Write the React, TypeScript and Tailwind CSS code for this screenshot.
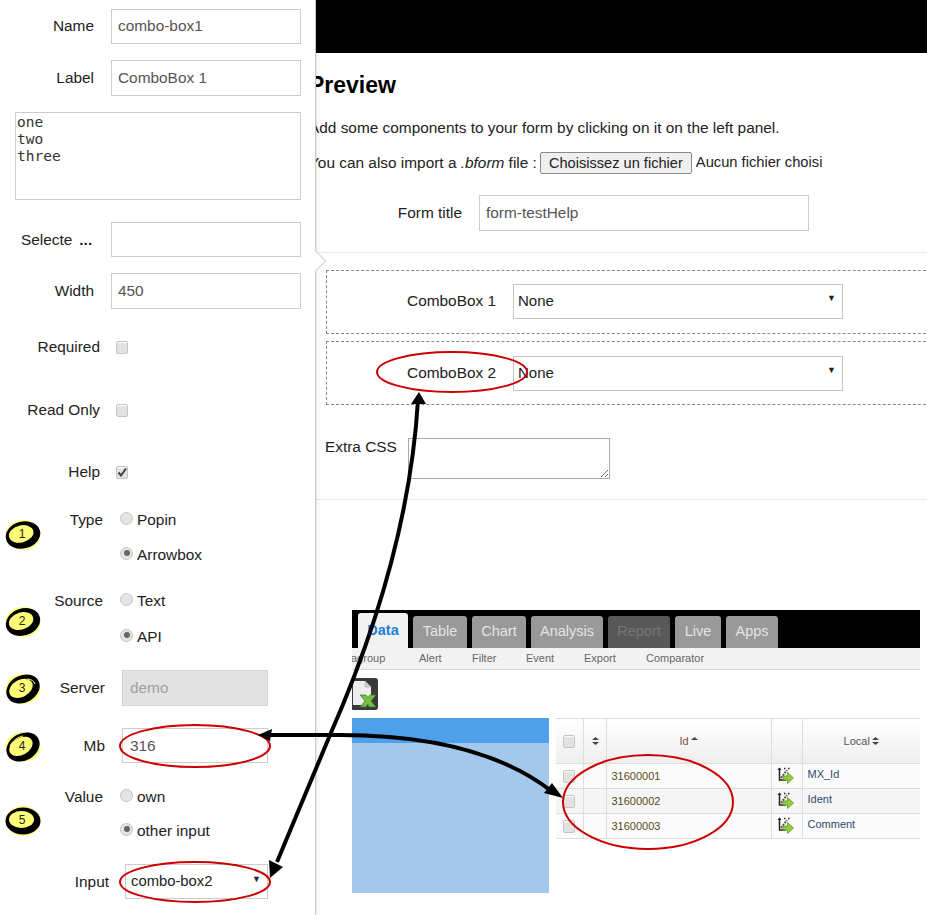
import React from "react";

const inputCls = "border border-[#cccccc] bg-white px-[6px] text-[#555555] flex items-center";

function Check({ on }: { on?: boolean }) {
  return (
    <span className="w-[12px] h-[13px] rounded-[2px] border border-[#c4c4c4] bg-[#e2e2e2] flex items-center justify-center shadow-[inset_0_1px_1px_#fff]">
      {on && (
        <svg width="10" height="10" viewBox="0 0 10 10">
          <path d="M1.5 5.5 L4 8.5 L9 1.5" fill="none" stroke="#444" strokeWidth="2" />
        </svg>
      )}
    </span>
  );
}

function Radio({ on }: { on?: boolean }) {
  return (
    <span className="w-[13px] h-[13px] rounded-full border border-[#c4c4c4] bg-[#e4e4e4] flex items-center justify-center">
      {on && <span className="w-[6px] h-[6px] rounded-full bg-[#666666]" />}
    </span>
  );
}

function Badge({ n, rot, extra, className }: { n: number; rot: number; extra?: string; className: string }) {
  return (
    <div className={"absolute w-[36px] h-[30px] " + className}>
      <svg width="36" height="30" viewBox="0 0 36 30" className="absolute inset-0">
        <ellipse cx="18" cy="15" rx="17.5" ry="15" fill="#ffff77" />
        <ellipse cx="18" cy="15" rx="17.5" ry="13.5" fill="#000" transform={`rotate(${rot} 18 15)`} />
        <ellipse cx="16.5" cy="13.5" rx="12.5" ry="8.5" fill="#ffff77" transform={`rotate(${rot} 18 15)`} />
        {extra && <path d={extra} fill="none" stroke="#ffff77" strokeWidth="1" />}
      </svg>
      <span className="absolute inset-0 -mt-[2px] -ml-[2px] flex items-center justify-center text-[12px] text-[#222222]">{n}</span>
    </div>
  );
}

function RowIcon() {
  return (
    <svg width="17" height="17" viewBox="0 0 17 17" className="ml-[5px] -mt-[2px]">
      <path d="M2.5 1 V13 H9" fill="none" stroke="#222" strokeWidth="1.5" />
      <path d="M0.5 3 L2.5 0.5 L4.5 3" fill="#222" />
      <path d="M4 11 L10 3" fill="none" stroke="#555" strokeWidth="2" strokeDasharray="2 1" />
      <path d="M7 1.5 h1.5 M11 1.5 h1.5" stroke="#222" strokeWidth="1.4" />
      <path d="M6 9 H10.5 V5.5 L16.5 11 L10.5 16.5 V13 H6 Z" fill="#93cc3a" stroke="#5d8f1e" strokeWidth="0.7" />
    </svg>
  );
}

function Sort({ up }: { up?: boolean }) {
  return (
    <svg width="7" height="8" viewBox="0 0 7 8" className="inline-block align-baseline ml-[2px]">
      <path d="M3.5 0 L7 3 H0 Z" fill="#444" />
      {!up && <path d="M3.5 8 L7 5 H0 Z" fill="#444" />}
    </svg>
  );
}

const rows = [
  { id: "31600001", local: "MX_Id", bg: "bg-[#fbfbfb]" },
  { id: "31600002", local: "Ident", bg: "bg-[#f5f5f5]" },
  { id: "31600003", local: "Comment", bg: "bg-[#fbfbfb]" },
];

const tabs = [
  { t: "Table", c: "w-[54px] bg-[#999999] text-[#e4e4e4]" },
  { t: "Chart", c: "w-[54px] bg-[#999999] text-[#e4e4e4]" },
  { t: "Analysis", c: "w-[72px] bg-[#999999] text-[#e4e4e4]" },
  { t: "Report", c: "w-[62px] bg-[#585858] text-[#757575]" },
  { t: "Live", c: "w-[46px] bg-[#999999] text-[#e4e4e4]" },
  { t: "Apps", c: "w-[52px] bg-[#999999] text-[#e4e4e4]" },
];

export default function App() {
  return (
    <div className="relative flex h-[915px] w-[927px] overflow-hidden bg-white text-[15.4px] text-[#222222] font-['Liberation_Sans',Arial,sans-serif]">
      {/* Left settings panel */}
      <aside className="relative z-10 w-[316px] shrink-0 flex flex-col bg-white border-r border-[#c8c8c8] shadow-[1px_0_4px_rgba(0,0,0,0.12)]">
        <div className="flex items-center h-[35px] mt-[9px] pb-[1px]">
          <label className="w-[94px] text-right">Name</label>
          <div className={inputCls + " ml-[17px] w-[190px] h-[35px] pb-[1px]"}>combo-box1</div>
        </div>
        <div className="flex items-center h-[36px] mt-[16px]">
          <label className="w-[94px] text-right">Label</label>
          <div className={inputCls + " ml-[17px] w-[190px] h-full"}>ComboBox 1</div>
        </div>
        <textarea
          readOnly
          defaultValue={"one\ntwo\nthree"}
          className="ml-[15px] mt-[16px] w-[286px] h-[88px] shrink-0 border border-[#cccccc] px-px pt-px resize-none text-[14.5px] leading-[17px] text-[#333333] font-['DejaVu_Sans_Mono',monospace]"
        />
        <div className="flex items-center h-[35px] mt-[22px]">
          <label className="ml-[21px] w-[73px] flex items-baseline whitespace-nowrap">
            Selecte<span className="ml-[7px] font-bold">...</span>
          </label>
          <div className={inputCls + " ml-[17px] w-[190px] h-full"} />
        </div>
        <div className="flex items-center h-[36px] mt-[16px]">
          <label className="w-[94px] text-right">Width</label>
          <div className={inputCls + " ml-[17px] w-[190px] h-full"}>450</div>
        </div>
        <div className="flex items-center h-[24px] mt-[26px]">
          <label className="w-[100px] text-right">Required</label>
          <span className="ml-[16px]"><Check /></span>
        </div>
        <div className="flex items-center h-[24px] mt-[39px]">
          <label className="w-[100px] text-right">Read Only</label>
          <span className="ml-[16px]"><Check /></span>
        </div>
        <div className="flex items-center h-[24px] mt-[38px]">
          <label className="w-[100px] text-right">Help</label>
          <span className="ml-[16px]"><Check on /></span>
        </div>
        <div className="flex items-center h-[24px] mt-[24px]">
          <label className="w-[103px] text-right">Type</label>
          <span className="ml-[17px] mr-[4px] -mt-[4px]"><Radio /></span>Popin
        </div>
        <div className="flex items-center h-[24px] mt-[11px]">
          <span className="ml-[120px] mr-[4px] -mt-[4px]"><Radio on /></span>Arrowbox
        </div>
        <div className="flex items-center h-[24px] mt-[22px]">
          <label className="w-[103px] text-right">Source</label>
          <span className="ml-[17px] mr-[4px] -mt-[4px]"><Radio /></span>Text
        </div>
        <div className="flex items-center h-[24px] mt-[12px]">
          <span className="ml-[120px] mr-[4px] -mt-[4px]"><Radio on /></span>API
        </div>
        <div className="flex items-center h-[36px] mt-[21px]">
          <label className="w-[105px] text-right">Server</label>
          <div className="ml-[17px] w-[146px] h-full flex items-center px-[7px] bg-[#e2e2e2] border border-[#d4d4d4] text-[#a0a0a0]">demo</div>
        </div>
        <div className="flex items-center h-[35px] mt-[22px]">
          <label className="w-[105px] text-right">Mb</label>
          <div className={inputCls + " ml-[17px] w-[146px] h-full !px-[7px]"}>316</div>
        </div>
        <div className="flex items-center h-[24px] mt-[22px]">
          <label className="w-[103px] text-right">Value</label>
          <span className="ml-[17px] mr-[4px] -mt-[4px]"><Radio /></span>own
        </div>
        <div className="flex items-center h-[24px] mt-[10px]">
          <span className="ml-[120px] mr-[4px] -mt-[4px]"><Radio on /></span>other input
        </div>
        <div className="flex items-center h-[35px] mt-[21px]">
          <label className="w-[109px] text-right">Input</label>
          <div className="ml-[16px] w-[143px] h-full flex items-center justify-between pl-[5px] pr-[6px] border border-[#cccccc] text-[14.8px]">
            <span>combo-box2</span>
            <span className="text-[9px] -mt-[3px] text-[#222222]">▼</span>
          </div>
        </div>
        {/* notch */}
        <div className="absolute left-[307px] top-[253px] w-[16px] h-[16px] rotate-45 bg-white border-t border-r border-[#d0d0d0]" />
      </aside>

      {/* Preview area */}
      <main className="flex-1 min-w-0 flex flex-col overflow-hidden">
        <div className="h-[53px] shrink-0 bg-black" />
        <h2 className="-ml-[7px] mt-[18px] text-[23px] leading-[28px] font-bold text-black">Preview</h2>
        <p className="-ml-[7px] mt-[19px] leading-[20px]">Add some components to your form by clicking on it on the left panel.</p>
        <div className="-ml-[7px] mt-[13px] flex items-center whitespace-nowrap h-[23px]">
          <span>You can also import a <em>.bform</em> file :</span>
          <button className="ml-[3px] w-[152px] h-[22px] rounded-[2px] border border-[#8a8a8a] bg-[#efefef] text-[14.6px] text-[#222222]">Choisissez un fichier</button>
          <span className="ml-[4px] text-[14.7px]">Aucun fichier choisi</span>
        </div>
        <div className="flex items-center h-[36px] mt-[21px]">
          <label className="w-[146px] text-right">Form title</label>
          <div className={inputCls + " ml-[17px] w-[330px] h-full"}>form-testHelp</div>
        </div>
        <div className="mt-[21px] h-px shrink-0 bg-[#e8e8e8]" />
        <div className="ml-[10px] mt-[17px] w-[640px] h-[64px] shrink-0 flex items-center pb-[2px] border border-dashed border-[#888888]">
          <label className="w-[169px] text-right">ComboBox 1</label>
          <div className="ml-[17px] w-[330px] h-[35px] flex items-center justify-between pl-[4px] pr-[6px] border border-[#c4c4c4] text-[15px]">
            <span>None</span><span className="text-[9px] -mt-[5px]">▼</span>
          </div>
        </div>
        <div className="ml-[10px] mt-[7px] w-[640px] h-[64px] shrink-0 flex items-center border border-dashed border-[#888888]">
          <label className="w-[169px] text-right">ComboBox 2</label>
          <div className="ml-[17px] w-[330px] h-[35px] flex items-center justify-between pl-[4px] pr-[6px] border border-[#c4c4c4] text-[15px]">
            <span>None</span><span className="text-[9px] -mt-[5px]">▼</span>
          </div>
        </div>
        <div className="ml-[9px] mt-[33px] flex items-start">
          <label className="w-[82px] leading-[18px]">Extra CSS</label>
          <textarea readOnly className="ml-px w-[202px] h-[41px] shrink-0 border border-[#a8a8a8] bg-white" />
        </div>
        <div className="mt-[20px] h-px shrink-0 bg-[#e8e8e8]" />

        {/* Embedded screenshot */}
        <div className="ml-[36px] mt-[110px] w-[568px] flex flex-col">
          <div className="h-[38px] bg-black flex items-end pl-[6px] gap-[5px]">
            <div className="w-[50px] h-[35px] rounded-t-[3px] bg-[#f2f2f2] flex items-center justify-center text-[14.5px] font-bold text-[#1e7fd8]">Data</div>
            {tabs.map((t) => (
              <div key={t.t} className={"h-[32px] rounded-t-[3px] flex items-center justify-center text-[14.5px] " + t.c}>{t.t}</div>
            ))}
          </div>
          <div className="h-[22px] bg-[#f2f2f2] border-b border-[#d8d8d8] flex items-center overflow-hidden text-[11px] text-[#666666] whitespace-nowrap">
            <span className="w-[67px] -ml-[1px]">agroup</span>
            <span className="w-[53px] ml-[1px]">Alert</span>
            <span className="w-[54px]">Filter</span>
            <span className="w-[58px]">Event</span>
            <span className="w-[62px]">Export</span>
            <span>Comparator</span>
          </div>
          <div className="mt-[8px] w-[26px] h-[32px] rounded-r-[3px] bg-[#3a3a3a] flex items-center">
            <svg width="25" height="28" viewBox="0 0 25 28">
              <path d="M1 1 H13 L19 7 V25 H1 Z" fill="#eeeeee" />
              <path d="M13 1 V7 H19" fill="#cfcfcf" stroke="#aaa" strokeWidth="0.5" />
              <path d="M8 15 H14 L16 18 L18 15 H24 L19 21 L24 27 H17 L15.5 24 L14 27 H8 L13 21 Z" fill="#72c043" stroke="#2f7a1f" strokeWidth="0.7" />
            </svg>
          </div>
          <div className="mt-[8px] flex items-start">
            <div className="w-[197px] h-[175px] shrink-0 flex flex-col bg-[#a3c8eb]">
              <div className="h-[25px] bg-[#4fa0ea]" />
            </div>
            <table className="ml-[7px] w-[364px] table-fixed border-collapse text-[11px] text-[#444444]">
              <colgroup>
                <col className="w-[27px]" /><col className="w-[23px]" /><col className="w-[165px]" /><col className="w-[31px]" /><col />
              </colgroup>
              <thead>
                <tr className="h-[45px] bg-gradient-to-b from-white to-[#eeeeee]">
                  <th className="border-y border-r border-[#dddddd] font-normal"><span className="flex justify-center"><Check /></span></th>
                  <th className="border border-[#dddddd] font-normal"><Sort /></th>
                  <th className="border border-[#dddddd] font-normal text-[#7a5040]">Id<Sort up /></th>
                  <th className="border border-[#dddddd]" />
                  <th className="border-y border-l border-[#dddddd] font-normal text-[#555555]">Local<Sort /></th>
                </tr>
              </thead>
              <tbody>
                {rows.map((r) => (
                  <tr key={r.id} className={"h-[25px] " + r.bg}>
                    <td className="border-y border-r border-[#dddddd]"><span className="flex justify-center"><Check /></span></td>
                    <td className="border border-[#dddddd]" />
                    <td className="border border-[#dddddd] pl-[5px] text-[#5a4a20]">{r.id}</td>
                    <td className="border border-[#dddddd]"><RowIcon /></td>
                    <td className="border-y border-l border-[#dddddd] pl-[5px] pb-[4px] text-[#2f4a6a]">{r.local}</td>
                  </tr>
                ))}
              </tbody>
            </table>
          </div>
        </div>
      </main>

      {/* Annotations */}
      <Badge n={1} rot={-14} className="left-[5px] top-[520px] z-20" />
      <Badge n={2} rot={-18} className="left-[5px] top-[607px] z-20" />
      <Badge n={3} rot={-28} extra="M22 5 C26 5 29 7 30 10" className="left-[5px] top-[674px] z-20" />
      <Badge n={4} rot={-30} extra="M5 14 C8 8 13 5 18 4" className="left-[5px] top-[732px] z-20" />
      <Badge n={5} rot={0} className="left-[5px] top-[806px] z-20" />
      <svg width="927" height="915" viewBox="0 0 927 915" className="absolute inset-0 z-30 pointer-events-none">
        <g fill="none" stroke="#cc0000" strokeWidth="2">
          <ellipse cx="195" cy="746" rx="75" ry="21" />
          <ellipse cx="195" cy="882" rx="75" ry="20" />
          <ellipse cx="452" cy="372" rx="75" ry="20" />
          <ellipse cx="648" cy="802" rx="85" ry="47" />
        </g>
        <g fill="none" stroke="#000" strokeWidth="4">
          <path d="M270 735 H340 C 430 735 500 752 550 790" />
          <path d="M418 400 C 412 500 385 610 330 735 L 277 862" />
        </g>
        <g fill="#000">
          <path d="M258 735 L272 729 L270 741 Z" />
          <path d="M563 798 L544 793 L552 783 Z" />
          <path d="M419 392 L411 404 L426 404 Z" />
          <path d="M270 878 L269 860 L283 867 Z" />
        </g>
      </svg>
    </div>
  );
}
